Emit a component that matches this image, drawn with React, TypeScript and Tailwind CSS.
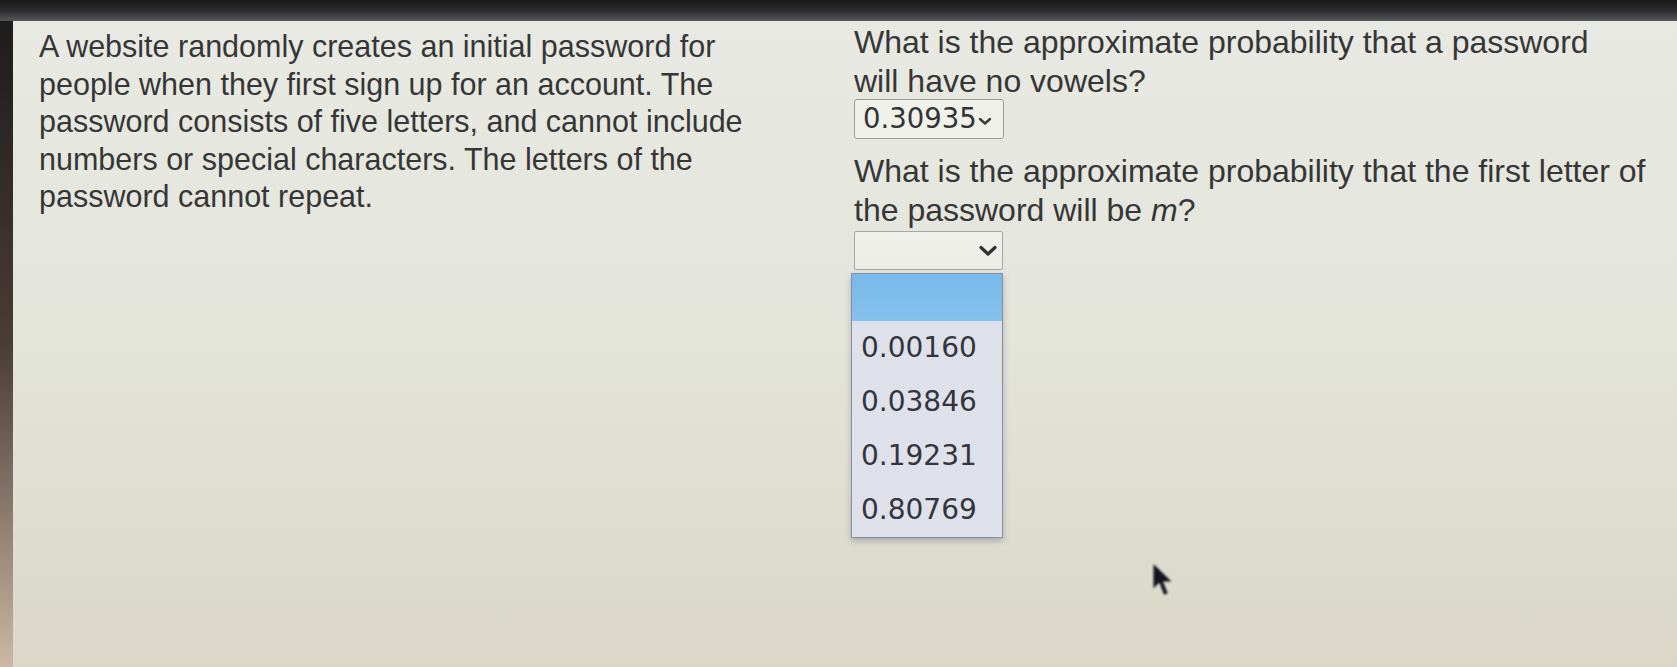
export default function App() {
  const options = ["0.00160", "0.03846", "0.19231", "0.80769"];

  return (
    <div className="relative w-[1677px] h-[667px] overflow-hidden bg-[#1c1c1c] flex flex-col font-['Liberation_Sans',Arial,sans-serif]">
      {/* monitor bezel */}
      <div className="h-[21px] shrink-0 bg-gradient-to-b from-[#1a1a1a] via-[#2c2c2e] to-[#55575c]" />

      <div className="flex flex-1">
        <div className="w-[13px] shrink-0 bg-gradient-to-b from-[#1f1c1c] via-[#4a3c36] to-[#cdb8a6]" />

        <div className="flex flex-1 bg-gradient-to-b from-[#e8e9e2] via-[#e3e4da] to-[#dad7c7] text-[#363636]">
          <div className="w-[841px] shrink-0 pl-[26px] pt-[7px]">
            <p className="text-[30.5px] leading-[37.5px] whitespace-nowrap">
              A website randomly creates an initial password for
              <br />
              people when they first sign up for an account. The
              <br />
              password consists of five letters, and cannot include
              <br />
              numbers or special characters. The letters of the
              <br />
              password cannot repeat.
            </p>
          </div>

          <div className="flex flex-col mt-[2px]">
            <p className="text-[32px] leading-[39px] whitespace-nowrap">
              What is the approximate probability that a password
              <br />
              will have no vowels?
            </p>

            <div className="-mt-[2px] flex h-[40px] w-[150px] items-center rounded-[3px] border border-[#9a9a97] bg-[#f1f1ec] pl-[8px]">
              <span className="font-['DejaVu_Sans',sans-serif] text-[27.5px] leading-none text-[#333]">0.30935</span>
              <svg width="14" height="9" viewBox="0 0 14 9" className="ml-[1px] mt-[5px]">
                <path d="M2 2 L7 6.5 L12 2" fill="none" stroke="#3a3a3a" strokeWidth="2.4" strokeLinecap="round" strokeLinejoin="round" />
              </svg>
            </div>

            <p className="mt-[13px] text-[32px] leading-[39px] whitespace-nowrap">
              What is the approximate probability that the first letter of
              <br />
              the password will be <i>m</i>?
            </p>

            <div className="mt-[1px] flex h-[39px] w-[149px] items-center justify-end rounded-[2px] border border-[#a6a6a3] bg-gradient-to-b from-[#f1f1ec] to-[#ecede6] pr-[4px]">
              <svg width="20" height="12" viewBox="0 0 20 12">
                <path d="M3 2.5 L10 9 L17 2.5" fill="none" stroke="#2f2f33" strokeWidth="3.2" strokeLinecap="round" strokeLinejoin="round" />
              </svg>
            </div>

            <div className="mt-[3px] -ml-[3px] w-[152px] border border-[#8a90a0] bg-[#dfe1ea] shadow-[0_3px_6px_rgba(70,80,110,0.35)]">
              <div className="h-[47px] bg-gradient-to-b from-[#78b8ea] to-[#86c1ec]" />
              {options.map((o) => (
                <div key={o} className="flex h-[54px] items-center pl-[9px] font-['DejaVu_Sans',sans-serif] text-[28px] text-[#33343c]">
                  {o}
                </div>
              ))}
            </div>
          </div>
        </div>
      </div>

      {/* mouse pointer */}
      <svg width="24" height="36" viewBox="0 0 22 34" className="absolute left-[1151px] top-[563px] blur-[1px]">
        <path d="M2 1 L2 24 L7.5 18.5 L12 30 L15.5 28.5 L11 17.5 L19 17.5 Z" fill="#141420" />
      </svg>
    </div>
  );
}
